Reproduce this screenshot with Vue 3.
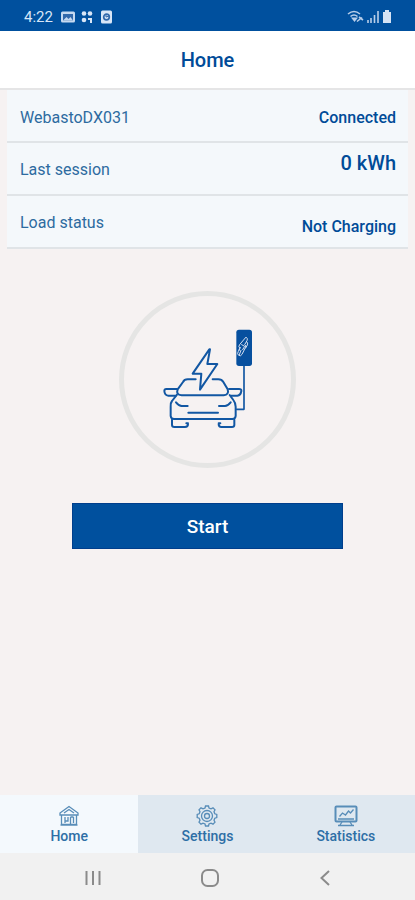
<script setup>
import { ref } from 'vue'

const rows = [
  { label: 'WebastoDX031', value: 'Connected', kind: 'device' },
  { label: 'Last session', value: '0 kWh', kind: 'session' },
  { label: 'Load status', value: 'Not Charging', kind: 'load' },
]
const tabs = ['Home', 'Settings', 'Statistics']
const active = ref('Home')
</script>

<template>
  <div class="app">
    <div class="status-bar">
      <span class="clock">4:22</span>
      <svg class="notices" width="52" height="14" viewBox="0 0 52 14" aria-hidden="true">
        <rect x="0" y="1.500" width="14" height="11" rx="1.500" fill="#c5d9f0" />
        <path d="M2 10.500V4h10v6.500z" fill="#3269ab" />
        <path d="M2 10.500L5.500 7l2 2L9.500 7l2.500 3.500z" fill="#c5d9f0" />
        <g fill="#d8e6f7">
          <circle cx="23" cy="3.500" r="2.300" /><circle cx="29" cy="3.500" r="2.300" />
          <circle cx="23" cy="10" r="2.300" /><path d="M27 8h4v5h-2v-3h-2z" />
          <rect x="40" y="0.500" width="11" height="13" rx="1.500" />
        </g>
        <circle cx="45.500" cy="7" r="2.800" fill="none" stroke="#3269ab" stroke-width="1.700" />
        <path d="M45 4v3l3-1" fill="none" stroke="#3269ab" />
      </svg>
      <svg class="signals" width="46" height="15" viewBox="0 0 46 15" aria-hidden="true">
        <g fill="none" stroke="#b9cfe9" stroke-width="1.600">
          <path d="M1 5q6-5 12 0M3.500 7.500q3.500-3 7 0" />
          <path d="M10 12.500l5-4M12 8l4 3" />
          <path d="M21 14v-3M24 14V9M27.500 14V6M31 14V2" />
        </g>
        <path d="M7.500 13L4 8.500h7z" fill="#b9cfe9" />
        <path d="M36 3h2V1h4v2h2v11h-8z" fill="#d5e3f5" />
      </svg>
    </div>

    <header class="header"><h1>Home</h1></header>

    <main class="content">
      <dl class="info">
        <div v-for="row in rows" :key="row.label" class="row" :class="row.kind">
          <dt>{{ row.label }}</dt>
          <dd>{{ row.value }}</dd>
        </div>
      </dl>

      <div class="dial">
        <svg width="110" height="115" viewBox="0 0 330 345" role="img" aria-label="Car at charging station">
          <g fill="none" stroke="#1257a3" stroke-width="6" stroke-linejoin="round" stroke-linecap="round">
            <path d="M122 178H98Q88 178 84 186L68 208Q62 224 80 226H206Q223 224 218 208L205 186Q200 178 190 178H173" />
            <path d="M66 207H34Q28 207 28 213Q29 226 40 227H61M222 207H252Q260 207 259 213Q257 226 247 227H228" />
            <path d="M66 224L51 243Q46 249 47 260V288Q48 297 57 297H232Q241 297 242 288V260Q242 249 235 240L224 225" />
            <path d="M51 299V315Q51 321 58 321H90Q99 321 99 312M191 312Q191 321 199 321H231Q238 321 238 315V299M99 310H94M191 310H196" />
            <path d="M63 247Q72 258 80 258H98M227 247Q218 258 210 258H192M100 278H189" />
            <path d="M163 88L113 161H139L135 209L187 132H157L165 88Z" />
            <path d="M267 137V268H245" stroke-width="5" />
          </g>
          <rect x="244" y="29" width="47" height="109" rx="8" fill="#07509f" />
          <g fill="none" stroke="#d6e0f1" stroke-width="3" stroke-linecap="round" stroke-linejoin="round">
            <path d="M274 52q6 4 2 10l-7 12q6 3 2 9l-10 20q-4 7-10 3t-1-12l5-9q-6-4-2-10z" />
            <path d="M275 65q5 4 2 10l-5 9M256 82q-5 4-4 9M260 74l9 5-6 10M258 91l-5 13" />
          </g>
        </svg>
      </div>

      <button class="start" type="button">Start</button>
    </main>

    <nav class="tabs" aria-label="Main">
      <a
        v-for="tab in tabs"
        :key="tab"
        href="#"
        :class="{ active: active === tab }"
        @click.prevent="active = tab"
      >
        <svg v-if="tab === 'Home'" width="24" height="22" viewBox="0 0 24 22" aria-hidden="true">
          <path d="M3 8L12 1.500 21 8v2H3zM4.500 10v9.500h15V10M3.500 20h17M7 8l5-3.500L17 8" />
          <path d="M8 12v6M11 12v4H8M13.500 12v7M16.500 12v6M13.500 12h3" />
        </svg>
        <svg v-else-if="tab === 'Settings'" width="24" height="22" viewBox="0 0 24 22" aria-hidden="true">
          <path d="M10 3l.500-2h3l.500 2 2 .800 2-1 2 2-1 2 .800 2 2 .700v3l-2 .700-.800 2 1 2-2 2-2-1-2 .800-.500 2h-3l-.500-2-2-.800-2 1-2-2 1-2-.800-2-2-.700v-3l2-.700.800-2-1-2 2-2 2 1z" />
          <circle cx="12" cy="11" r="5.500" />
          <circle cx="12" cy="11" r="2.500" />
        </svg>
        <svg v-else width="24" height="22" viewBox="0 0 24 22" aria-hidden="true">
          <rect x="1.500" y="1.500" width="21" height="15" rx="1" stroke-width="2" />
          <path d="M4 14h16M5.500 11.500l3-3.500 3 2 3-4 2 2 3-3.500M8 17l-2 3M16 17l2 3M4 20.500h16" />
        </svg>
        <span>{{ tab }}</span>
      </a>
    </nav>

    <div class="system-nav">
      <button type="button" aria-label="Recent apps">
        <svg width="20" height="20" viewBox="0 0 20 20"><path d="M3.500 3v14M10 3v14M16.500 3v14" /></svg>
      </button>
      <button type="button" aria-label="Home screen">
        <svg width="20" height="20" viewBox="0 0 20 20"><rect x="2" y="2" width="16" height="16" rx="5.500" /></svg>
      </button>
      <button type="button" aria-label="Back">
        <svg width="20" height="20" viewBox="0 0 20 20"><path d="M13 3l-7.500 7 7.500 7" /></svg>
      </button>
    </div>
  </div>
</template>

<style>
body {
  margin: 0;
}
</style>

<style scoped>
.app {
  display: flex;
  flex-direction: column;
  min-height: 100vh;
  background: #f6f2f2;
  color: #004b98;
  font-family: Roboto, sans-serif;
}

.status-bar {
  display: flex;
  align-items: center;
  box-sizing: border-box;
  height: 31px;
  padding: 2px 22px 0 24px;
  background: #00509e;
}

.clock {
  color: #d8e6f7;
  font-size: 15px;
  line-height: 20px;
}

.notices {
  margin-left: 8px;
}

.signals {
  margin-left: auto;
}

.header {
  padding: 17px 16px 15px;
  border-bottom: 2px solid #e5e5e6;
  background: #fff;
  text-align: center;
}

.header h1 {
  margin: 0;
  font-size: 20px;
  font-weight: 500;
  line-height: 25px;
}

.content {
  display: flex;
  flex: 1;
  flex-direction: column;
  align-items: center;
}

.info {
  align-self: stretch;
  margin: 0 7px;
  background: #f4f8fb;
}

.row {
  display: flex;
  align-items: center;
  justify-content: space-between;
  box-sizing: border-box;
  height: 53px;
  padding: 2px 12px 0 13px;
  border-bottom: 2px solid #e0e4e7;
}

.device {
  padding-top: 5px;
}

dt {
  color: #2d6ba0;
  font-size: 16px;
  line-height: 24px;
}

dd {
  margin: 0;
  font-size: 16px;
  font-weight: 500;
  line-height: 24px;
}

.session dd {
  padding-bottom: 14px;
  font-size: 20px;
}

.load dd {
  padding-top: 8px;
}

.dial {
  display: flex;
  align-items: center;
  justify-content: center;
  box-sizing: border-box;
  width: 177px;
  height: 177px;
  margin-top: 42px;
  padding: 0 0 4px 4px;
  border: 5px solid #e5e5e4;
  border-radius: 50%;
}

.start {
  align-self: stretch;
  margin: 35px 72px;
  padding: 11px 10px 9px;
  border: 1px solid #003e8c;
  background: #00509e;
  color: #fff;
  font: 500 19px/24px Roboto, sans-serif;
}

.tabs {
  display: grid;
  grid-template-columns: repeat(3, 1fr);
}

.tabs a {
  display: flex;
  flex-direction: column;
  align-items: center;
  padding: 10px 0 7px;
  background: #dfe8f0;
  color: #2e6fa6;
  font-size: 14px;
  font-weight: 500;
  line-height: 19px;
  text-decoration: none;
}

.tabs a.active {
  background: #f4f9fd;
}

.tabs svg {
  fill: none;
  stroke: #588db8;
  stroke-width: 1.3;
}

.system-nav {
  display: flex;
  justify-content: space-between;
  padding: 12px 76px 9px 80px;
  background: #f1f1f1;
}

.system-nav button {
  display: flex;
  padding: 3px;
  border: 0;
  background: none;
}

.system-nav svg {
  width: 20px;
  height: 20px;
  fill: none;
  stroke: #8b8b8b;
  stroke-width: 2;
}
</style>
